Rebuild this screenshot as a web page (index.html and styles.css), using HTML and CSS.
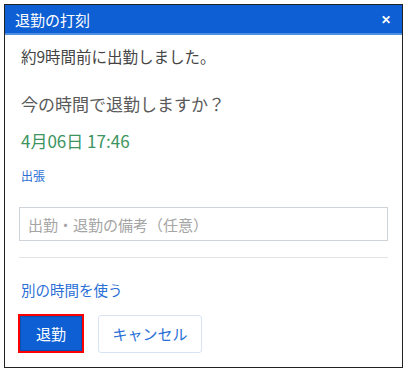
FILE: index.html
```html
<!DOCTYPE html>
<html lang="ja">
<head>
<meta charset="utf-8">
<link rel="stylesheet" href="styles.css">
</head>
<body>
<div class="dialog">
  <div class="header">
    <span class="title">退勤の打刻</span>
    <span class="close">✕</span>
  </div>
  <div class="content">
    <p class="msg">約9時間前に出勤しました。</p>
    <p class="question">今の時間で退勤しますか？</p>
    <p class="time">4月06日 17:46</p>
    <a class="link small">出張</a>
    <div class="input">出勤・退勤の備考（任意）</div>
    <hr class="sep">
    <a class="link other">別の時間を使う</a>
    <div class="buttons">
      <span class="focus"><button class="btn primary">退勤</button></span>
      <button class="btn secondary">キャンセル</button>
    </div>
  </div>
</div>
</body>
</html>
```
FILE: styles.css
```css
* { box-sizing: border-box; }
html, body { margin: 0; padding: 0; background: #fff; }
body {
  padding: 4px;
  font-family: "Noto Sans CJK JP", "Noto Sans", sans-serif;
}
.dialog {
  width: 399px;
  height: 364px;
  border: 1px solid #222;
  display: flex;
  flex-direction: column;
}
.header {
  height: 30px;
  background: #0e5fd3;
  border-bottom: 2px solid #4d8fe0;
  display: flex;
  align-items: center;
  justify-content: space-between;
  padding: 0 11px 0 10px;
  color: #fff;
}
.title { font-size: 15px; line-height: 1; }
.close { font-size: 12px; font-weight: bold; line-height: 1; }
.content {
  padding: 0 14px;
  display: flex;
  flex-direction: column;
}
p { margin: 0; }
.msg {
  margin-top: 11px;
  padding-left: 2px;
  font-size: 15.5px;
  line-height: 20px;
  color: #444;
}
.question {
  margin-top: 27px;
  padding-left: 2px;
  font-size: 17px;
  line-height: 22px;
  color: #5a5a5a;
}
.time {
  margin-top: 15px;
  padding-left: 2px;
  font-size: 17px;
  line-height: 22px;
  color: #3d9460;
}
.link { color: #2a6fd6; }
.small {
  margin-top: 16px;
  padding-left: 2px;
  font-size: 12px;
  line-height: 16px;
}
.input {
  margin-top: 23px;
  height: 34px;
  border: 1px solid #cfd4da;
  padding-left: 8px;
  display: flex;
  align-items: center;
  font-size: 15px;
  color: #a5a5a5;
  width: 369px;
}
.sep {
  margin: 16px 0 0 0;
  width: 369px;
  border: 0;
  border-top: 1px solid #e3e3e3;
  height: 0;
}
.other {
  margin-top: 23px;
  padding-left: 2px;
  font-size: 14.5px;
  line-height: 18px;
}
.buttons {
  margin-top: 15px;
  display: flex;
  align-items: center;
  gap: 14px;
}
.focus {
  display: inline-flex;
  border: 2px solid #f00;
  margin-left: -1px;
}
.btn {
  font-family: inherit;
  font-size: 15px;
  height: 35px;
  margin: 0;
  cursor: pointer;
}
.primary {
  width: 62px;
  background: #0e5fd3;
  color: #fff;
  border: 1px solid #0a4fb5;
  border-radius: 0;
}
.secondary {
  width: 104px;
  height: 38px;
  background: #fff;
  color: #2a6fd6;
  border: 1px solid #d8e3f3;
  border-radius: 3px;
}
```
